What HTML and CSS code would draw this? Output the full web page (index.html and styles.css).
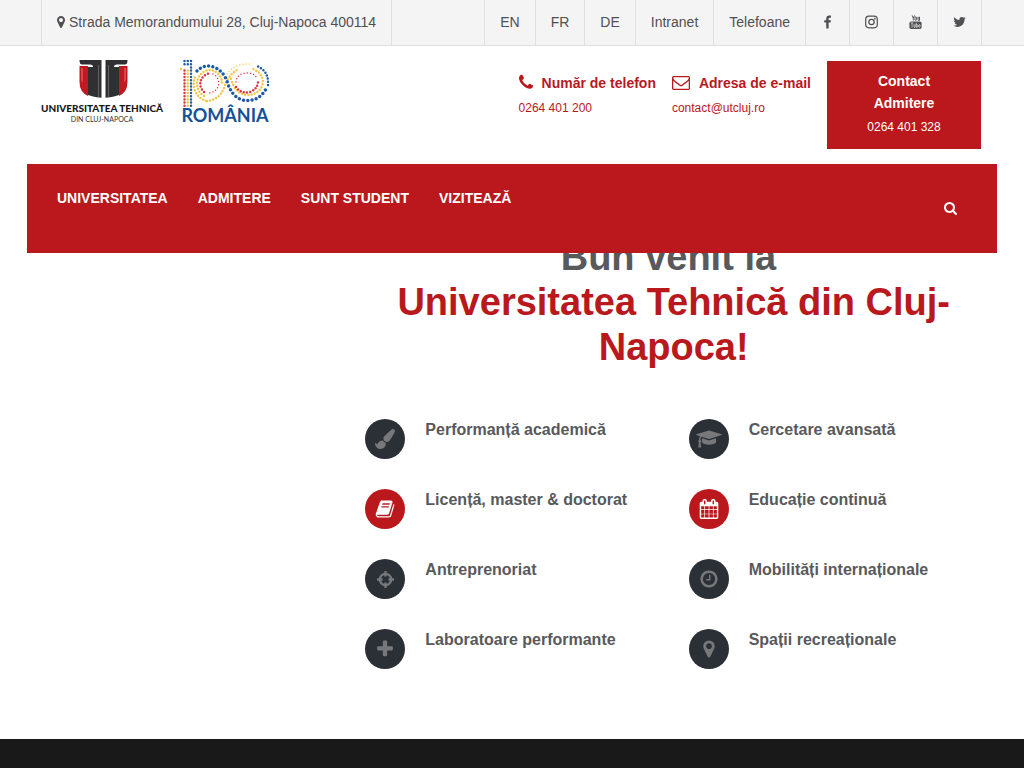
FILE: index.html
```html
<!DOCTYPE html>
<html lang="ro">
<head>
    <meta charset="UTF-8">
    <meta name="viewport" content="width=device-width, initial-scale=1.0">
    <title>Universitatea Tehnică din Cluj-Napoca</title>
    <link rel="stylesheet" href="styles.css">
</head>
<body>
    <div class="topbar">
        <div class="container topbar-inner">
            <ul class="top-list">
                <li><span class="top-item"><svg class="pin" viewBox="384 128 1024 1536"><path d="M1152 640q0-106-75-181t-181-75-181 75-75 181 75 181 181 75 181-75 75-181zm256 0q0 109-33 179l-364 774q-16 33-47.500 52t-67.500 19-67.500-19-46.500-52l-365-774q-33-70-33-179 0-212 150-362t362-150 362 150 150 362z"/></svg>Strada Memorandumului 28, Cluj-Napoca 400114</span></li>
            </ul>
            <ul class="top-list">
                <li><a class="top-item" href="#">EN</a></li>
                <li><a class="top-item" href="#">FR</a></li>
                <li><a class="top-item" href="#">DE</a></li>
                <li><a class="top-item" href="#">Intranet</a></li>
                <li><a class="top-item" href="#">Telefoane</a></li>
                <li><a class="top-item" href="#" aria-label="Facebook"><svg class="social" viewBox="64 0 1664 1664"><path d="M1343 12v264h-157q-86 0-116 36t-30 108v189h293l-39 296h-254v759h-306v-759h-255v-296h255v-218q0-186 104-288.500t277-102.500q147 0 228 12z"/></svg></a></li>
                <li><a class="top-item" href="#" aria-label="Instagram"><svg class="social line" viewBox="0 0 13 13"><rect x=".7" y=".7" width="11.600" height="11.600" rx="3.200"/><circle cx="6.500" cy="6.500" r="2.700"/><circle cx="9.800" cy="3.200" r=".3"/></svg></a></li>
                <li><a class="top-item" href="#" aria-label="YouTube"><svg class="social" viewBox="0 0 13 15"><path class="thin" d="M3 .5l1.200 3v2.300M5.400.5l-1.200 3M7.500 2.500v2.300q0 1-.8 1t-.8-1V2.800q0-.8.8-.8t.8.8M9.200 2v3q0 .8.700.8T10.700 5V2v4"/><rect x="0" y="7" width="13" height="8" rx="1.800"/><path class="thin cut" d="M1.500 8.500h2.600M2.800 8.500v5M4.900 10v2.700q0 .7.600.7t.6-.7V10M7.300 8.300v5M7.400 10.600q1.300-1 1.300.4v1.500q0 1.200-1.300.5M11.500 12.500q-.8 1.600-1.500.3v-1.900q.8-1.400 1.500 0v.8H10"/></svg></a></li>
                <li><a class="top-item" href="#" aria-label="Twitter"><svg class="social" viewBox="60 80 1660 1660"><path d="M1684 408q-67 98-162 167 1 14 1 42 0 130-38 259.500t-115.500 248.500-184.500 210.500-258 146-323 54.500q-271 0-496-145 35 4 78 4 225 0 401-138-105-2-188-64.500t-114-159.500q33 5 61 5 43 0 85-11-112-23-185.500-111.500t-73.500-205.500v-4q68 38 146 41-66-44-105-115t-39-154q0-88 44-163 121 149 294.500 238.500t371.500 99.500q-8-38-8-74 0-134 94.500-228.500t228.500-94.500q140 0 236 102 109-21 205-78-37 115-142 178 93-10 186-50z"/></svg></a></li>
            </ul>
        </div>
    </div>

    <header class="container header">
        <div class="logos">
            <a href="#" aria-label="Universitatea Tehnică">
                <svg class="logo-ut" viewBox="0 1 120 62">
                    <path fill="#c01920" d="M37.500 6h8.500v30q-8.500-4-8.500-14zM85.500 6h-8.500v30q8.500-4 8.500-14z"/>
                    <path fill="#d6474b" d="M39 8h2v15l-2-3zM82 8h2v12l-2 3z"/>
                    <path fill="#303033" d="M37.500 0h22v37.800q-5-.3-8.500-1.300V7q0-2.500-3-2.500h-8Q37.500 4.500 37.500 0zM85.500 0h-22v37.800q5-.3 8.500-1.300V7q0-2.500 3-2.500h8q2.500 0 2.500-4.500z"/>
                    <path fill="#303033" d="M46 7h5v29.500l-5-1.500zM77 7h-5v29.500l5-1.500z"/>
                    <path fill="#77777a" d="M56 5h.7v32h-.7zM66 5h.7v32h-.7z"/>
                    <text class="logo-name" x="60" y="52">UNIVERSITATEA TEHNICĂ</text>
                    <text class="logo-city" x="60" y="62">DIN CLUJ-NAPOCA</text>
                </svg>
            </a>
            <a href="#" aria-label="România 100">
                <svg class="logo-ro" viewBox="0 1 90 62">
                    <g class="dots">
                        <path class="yellow" d="M1 9v1"/>
                        <path class="blue" d="M4.500 1V7M7.800 1V7M11 1V46"/>
                        <path class="red" d="M4.500 10.600V46"/>
                        <path class="yellow" d="M7.800 10.600V46"/>
                        <path class="yellow" d="M26 41A18 18 0 0 1 16 15"/>
                        <path class="yellow" d="M24 36A14 14 0 0 1 29 10A13 13 0 0 1 42 23"/>
                        <path class="red" d="M24 32A10.500 10.500 0 0 1 30 13.500"/>
                        <path class="red small" d="M33 14A10 10 0 0 1 28 33"/>
                        <path class="yellow" d="M27 41Q39 40 44 28Q49 13 59 9"/>
                        <path class="blue big" d="M17 11Q24 4 34 7Q43 11 47 21Q51 36 62 40Q78 43 86 29"/>
                        <path class="blue" d="M88 25Q89 11 77 6"/>
                        <path class="yellow small" d="M47 14Q55 3 70 4"/>
                        <path class="yellow" d="M51 19Q55 34 67 35Q80 35 83 23Q83 13 73 9"/>
                        <path class="red" d="M56 27Q61 34 70 32Q78 29 78 21"/>
                        <path class="red small" d="M56 22Q57 13 68 13Q75 13 77 19"/>
                    </g>
                    <text class="logo-country" x="45" y="62">ROMÂNIA</text>
                </svg>
            </a>
        </div>
        <div class="contacts">
            <div class="contact">
                <strong><svg class="phone" viewBox="192 256 1408 1408"><path d="M1600 1240q0 27-10 70.500t-21 68.500q-21 50-122 106-94 51-186 51-27 0-53-3.500t-57.500-12.500-47-14.500-55.500-20.500-49-18q-98-35-175-83-127-79-264-216t-216-264q-48-77-83-175-3-9-18-49t-20.500-55.500-14.500-47-12.500-57.500-3.500-53q0-92 51-186 56-101 106-122 25-11 68.500-21t70.500-10q14 0 21 3 18 6 53 76 11 19 30 54t35 63.500 31 53.500q3 4 17.500 25t21.500 35.500 7 28.500q0 20-28.500 50t-62 55-62 53-28.500 46q0 9 5 22.500t8.500 20.500 14 24 11.500 19q76 137 174 235t235 174q2 1 19 11.500t24 14 20.500 8.500 22.500 5q18 0 46-28.500t53-62 55-62 50-28.500q14 0 28.500 7t35.500 21.500 25 17.500q25 15 53.500 31t63.500 35 54 30q70 35 76 53 3 7 3 21z"/></svg>Număr de telefon</strong>
                <a href="tel:0264401200">0264 401 200</a>
            </div>
            <div class="contact">
                <strong><svg class="mail" viewBox="0 128 1792 1664"><path d="M1664 1504v-768q-32 36-69 66-268 206-426 338-51 43-83 67t-86.500 48.500-102.500 24.500h-2q-48 0-102.500-24.500t-86.500-48.500-83-67q-158-132-426-338-37-30-69-66v768q0 13 9.500 22.500t22.500 9.500h1472q13 0 22.500-9.500t9.500-22.500zm0-1051v-24.500l-.5-13-3-12.500-5.500-9-9-7.500-14-2.500h-1472q-13 0-22.500 9.500t-9.500 22.500q0 168 147 284 193 152 401 317 6 5 35 29.500t46 37.500 44.500 31.500 50.500 27.500 43 9h2q20 0 43-9t50.500-27.500 44.500-31.500 46-37.500 35-29.500q208-165 401-317 54-43 100.500-115.500t46.500-131.500zm128-37v1088q0 66-47 113t-113 47h-1472q-66 0-113-47t-47-113v-1088q0-66 47-113t113-47h1472q66 0 113 47t47 113z"/></svg>Adresa de e-mail</strong>
                <a href="mailto:contact@utcluj.ro">contact@utcluj.ro</a>
            </div>
            <a class="admission" href="tel:0264401328">
                <strong>Contact<br>Admitere</strong>
                <span>0264 401 328</span>
            </a>
        </div>
    </header>

    <nav class="nav">
        <ul class="menu">
            <li><a href="#">UNIVERSITATEA</a></li>
            <li><a href="#">ADMITERE</a></li>
            <li><a href="#">SUNT STUDENT</a></li>
            <li><a href="#">VIZITEAZĂ</a></li>
        </ul>
        <button class="search" type="button" aria-label="Caută"><svg viewBox="64 128 1664 1664"><path d="M1216 832q0-185-131.500-316.500t-316.500-131.500-316.500 131.500-131.500 316.500 131.500 316.500 316.500 131.500 316.500-131.500 131.500-316.500zm512 832q0 52-38 90t-90 38q-54 0-90-38l-343-342q-179 124-399 124-143 0-273.500-55.500t-225-150-150-225-55.500-273.500 55.500-273.500 150-225 225-150 273.500-55.500 273.500 55.500 225 150 150 225 55.500 273.500q0 220-124 399l343 343q37 37 37 90z"/></svg></button>
    </nav>

    <main class="container welcome">
        <div class="welcome-content">
            <h1>Bun venit la&nbsp;<br><span>Universitatea Tehnică din Cluj-Napoca!</span></h1>
            <div class="features">
                <div class="feature">
                    <div class="circle"><svg viewBox="0 0 1792 1792"><path d="M1615 0q70 0 122.500 46.500t52.500 116.500q0 63-45 151-332 629-465 752-97 91-218 91-126 0-216.500-92.500t-90.500-219.500q0-128 92-212l638-579q59-54 130-54zm-909 1034q39 76 106.500 130t150.500 76l1 71q4 213-129.500 347t-348.500 134q-123 0-218-46.500t-152.500-127.500-86.500-183-29-220q7 5 41 30t62 44.500 59 36.500 46 17q41 0 55-37 25-66 57.500-112.500t69.500-76 88-47.500 103-25.500 125-10.500z"/></svg></div>
                    <h2>Performanță academică</h2>
                </div>
                <div class="feature">
                    <div class="circle"><svg class="wide" viewBox="0 0 2304 1792"><path d="M1774 836l18 316q4 69-82 128t-235 93.500-323 34.500-323-34.500-235-93.500-82-128l18-316 574 181q22 7 48 7t48-7zm530-324q0 23-22 31l-1120 352q-4 1-10 1t-10-1l-652-206q-43 34-71 111.500t-34 178.500q63 36 63 109 0 69-58 107l58 433q2 14-8 25-9 11-24 11h-192q-15 0-24-11-10-11-8-25l58-433q-58-38-58-107 0-73 65-111 11-207 98-330l-333-104q-22-8-22-31t22-31l1120-352q4-1 10-1t10 1l1120 352q22 8 22 31z"/></svg></div>
                    <h2>Cercetare avansată</h2>
                </div>
                <div class="feature">
                    <div class="circle active"><svg viewBox="0 0 1792 1792"><path d="M1703 478q40 57 18 129l-275 906q-19 64-76.500 107.500t-122.500 43.500h-923q-77 0-148.500-53.500t-99.500-131.500q-24-67-2-127 0-4 3-27t4-37q1-8-3-21.500t-3-19.500q2-11 8-21t16.500-23.500 16.500-23.500q23-38 45-91.500t30-91.500q3-10 .5-30t-.5-28q3-11 17-28t17-23q21-36 42-92t25-90q1-9-2.500-32t.5-28q4-13 22-30.500t22-22.500q19-26 42.500-84.500t27.500-96.500q1-8-3-25.500t-2-26.500q2-8 9-18t18-23 17-21q8-12 16.500-30.500t15-35 16-36 19.500-32 26.500-23.500 36-11.500 47.500 5.500l-1 3q38-9 51-9h761q74 0 114 56t18 130l-274 906q-36 119-71.500 153.500t-128.500 34.500h-869q-27 0-38 15-11 16-1 43 24 70 144 70h923q29 0 56-15.500t35-41.500l300-987q7-22 5-57 38 15 59 43zm-1064 2q-4 13 2 22.500t20 9.500h608q13 0 25.500-9.500t16.500-22.500l21-64q4-13-2-22.500t-20-9.500h-608q-13 0-25.500 9.500t-16.500 22.500zm-83 256q-4 13 2 22.500t20 9.500h608q13 0 25.500-9.500t16.500-22.500l21-64q4-13-2-22.500t-20-9.500h-608q-13 0-25.500 9.500t-16.500 22.500z"/></svg></div>
                    <h2>Licență, master &amp; doctorat</h2>
                </div>
                <div class="feature">
                    <div class="circle active"><svg viewBox="0 0 1792 1792"><path d="M192 1664h288v-288h-288v288zm352 0h320v-288h-320v288zm-352-352h288v-320h-288v320zm352 0h320v-320h-320v320zm-352-384h288v-288h-288v288zm736 736h320v-288h-320v288zm-384-736h320v-288h-320v288zm768 736h288v-288h-288v288zm-384-352h320v-320h-320v320zm-352-864v-288q0-13-9.500-22.500t-22.500-9.500h-64q-13 0-22.500 9.500t-9.500 22.500v288q0 13 9.500 22.500t22.500 9.500h64q13 0 22.500-9.500t9.500-22.500zm736 864h288v-320h-288v320zm-384-384h320v-288h-320v288zm384 0h288v-288h-288v288zm32-480v-288q0-13-9.500-22.500t-22.500-9.500h-64q-13 0-22.500 9.500t-9.500 22.500v288q0 13 9.500 22.500t22.500 9.500h64q13 0 22.500-9.500t9.500-22.500zm384-64v1280q0 52-38 90t-90 38h-1408q-52 0-90-38t-38-90v-1280q0-52 38-90t90-38h128v-96q0-66 47-113t113-47h64q66 0 113 47t47 113v96h384v-96q0-66 47-113t113-47h64q66 0 113 47t47 113v96h128q52 0 90 38t38 90z"/></svg></div>
                    <h2>Educație continuă</h2>
                </div>
                <div class="feature">
                    <div class="circle"><svg class="target" viewBox="0 0 20 20"><circle cx="10.500" cy="10.500" r="5.700"/><path d="M10.500 2v5.500M10.500 13.500v5.500M2 10.500h5.500M13.500 10.500h5.500"/></svg></div>
                    <h2>Antreprenoriat</h2>
                </div>
                <div class="feature">
                    <div class="circle"><svg viewBox="0 0 1792 1792"><path d="M1024 544v448q0 14-9 23t-23 9h-320q-14 0-23-9t-9-23v-64q0-14 9-23t23-9h224v-352q0-14 9-23t23-9h64q14 0 23 9t9 23zm416 352q0-148-73-273t-198-198-273-73-273 73-198 198-73 273 73 273 198 198 273 73 273-73 198-198 73-273zm224 0q0 209-103 385.500t-279.500 279.500-385.500 103-385.500-103-279.500-279.500-103-385.500 103-385.500 279.500-279.500 385.500-103 385.500 103 279.500 279.500 103 385.500z"/></svg></div>
                    <h2>Mobilități internaționale</h2>
                </div>
                <div class="feature">
                    <div class="circle"><svg viewBox="0 0 1792 1792"><path d="M1600 736v192q0 40-28 68t-68 28h-416v416q0 40-28 68t-68 28h-192q-40 0-68-28t-28-68v-416h-416q-40 0-68-28t-28-68v-192q0-40 28-68t68-28h416v-416q0-40 28-68t68-28h192q40 0 68 28t28 68v416h416q40 0 68 28t28 68z"/></svg></div>
                    <h2>Laboratoare performante</h2>
                </div>
                <div class="feature">
                    <div class="circle"><svg viewBox="0 0 1792 1792"><path d="M1152 640q0-106-75-181t-181-75-181 75-75 181 75 181 181 75 181-75 75-181zm256 0q0 109-33 179l-364 774q-16 33-47.500 52t-67.500 19-67.500-19-46.500-52l-365-774q-33-70-33-179 0-212 150-362t362-150 362 150 150 362z"/></svg></div>
                    <h2>Spații recreaționale</h2>
                </div>
            </div>
        </div>
    </main>

    <footer class="footer"></footer>
</body>
</html>
```
FILE: styles.css
```css
* {
    box-sizing: border-box;
}
body {
    margin: 0;
    min-height: 100vh;
    display: flex;
    flex-direction: column;
    font-family: "Liberation Sans", Arial, sans-serif;
    font-size: 14px;
    line-height: 22px;
    color: #505052;
    background: #fff;
}
ul {
    list-style: none;
    margin: 0;
    padding: 0;
}
a {
    color: inherit;
    text-decoration: none;
}
svg {
    fill: currentColor;
}
.container {
    width: 100%;
    max-width: 970px;
    margin: 0 auto;
    padding: 0 15px;
}

/* top bar */
.topbar {
    background: #f4f4f4;
    border-bottom: 1px solid #e0e0e0;
}
.topbar-inner {
    display: flex;
    justify-content: space-between;
}
.top-list {
    display: flex;
    border-left: 1px solid #e0e0e0;
    margin: 0 0 0 -1px;
}
.top-list li {
    border-right: 1px solid #e0e0e0;
}
.top-item {
    display: flex;
    align-items: center;
    height: 45px;
    padding: 0 15px 1px;
}
.pin {
    width: 8px;
    height: 12px;
    margin-right: 4px;
}
.social {
    width: 13px;
    height: 14px;
}
.line {
    fill: none;
    stroke: currentColor;
    stroke-width: 1.2;
}
.thin {
    fill: none;
    stroke: currentColor;
    stroke-width: 1;
}
.cut {
    stroke: #f4f4f4;
    stroke-width: .7;
}

/* logos and contact */
.header {
    display: flex;
    justify-content: space-between;
    align-items: flex-start;
    padding: 15px 16px 15px 15px;
}
.logos {
    display: flex;
    gap: 18px;
}
.logos svg {
    display: block;
    height: 62px;
    overflow: visible;
}
.logo-ut {
    width: 120px;
}
.logo-ro {
    width: 90px;
}
.logo-name,
.logo-city,
.logo-country {
    font-family: Lato, sans-serif;
    text-anchor: middle;
}
.logo-name {
    font-size: 10px;
    font-weight: 900;
    fill: #17171a;
}
.logo-city {
    font-size: 7px;
    fill: #333;
}
.logo-country {
    font-size: 18px;
    font-weight: 700;
    fill: #17509a;
}
.dots {
    fill: none;
    stroke-width: 2.5;
    stroke-linecap: round;
    stroke-dasharray: 0 3.2;
}
.blue {
    stroke: #1d5ba6;
}
.yellow {
    stroke: #f3c747;
}
.red {
    stroke: #dc3545;
}
.big {
    stroke-width: 3.5;
    stroke-dasharray: 0 4.3;
}
.small {
    stroke-width: 1.5;
}
.contacts {
    display: flex;
    align-items: flex-start;
    gap: 16px;
    color: #b9181d;
}
.contact {
    padding-top: 11px;
}
.contact strong {
    display: flex;
    align-items: center;
    margin-bottom: 3px;
}
.contact a {
    display: block;
    font-size: 12px;
}
.phone {
    width: 14px;
    height: 18px;
    margin-right: 9px;
}
.mail {
    width: 18px;
    height: 18px;
    margin-right: 9px;
}
.admission {
    width: 154px;
    padding: 9px 15px 11px;
    background: #ba181c;
    color: #fff;
    text-align: center;
}
.admission strong,
.admission span {
    display: block;
}
.admission span {
    margin-top: 2px;
    font-size: 12px;
}

/* main menu, overlaps the welcome title */
.nav {
    position: relative;
    z-index: 2;
    width: 100%;
    max-width: 970px;
    min-height: 89px;
    margin: 0 auto;
    padding: 0 40px 0 30px;
    display: flex;
    justify-content: space-between;
    background: #ba181c;
    color: #fff;
}
.menu {
    display: flex;
    gap: 30px;
    padding-top: 23px;
    font-weight: bold;
}
.search {
    align-self: center;
    padding: 0;
    border: none;
    background: none;
    color: #fff;
    cursor: pointer;
}
.search svg {
    display: block;
    width: 13px;
    height: 13px;
}

/* welcome */
.welcome {
    margin-top: -18px;
    padding-bottom: 40px;
}
.welcome-content {
    width: calc((100% + 30px) * 2 / 3 - 30px);
    margin-left: auto;
}
h1 {
    margin: 0 0 49px;
    font-size: 38px;
    line-height: 45px;
    text-align: center;
    color: #58595b;
}
h1 span {
    color: #b9181d;
}
.features {
    display: grid;
    grid-template-columns: 1fr 1fr;
    column-gap: 30px;
}
.feature {
    display: flex;
    gap: 20px;
    min-height: 70px;
}
.circle {
    display: flex;
    flex: none;
    align-items: center;
    justify-content: center;
    width: 40px;
    height: 40px;
    border-radius: 50%;
    background: #2b3037;
    color: #77787a;
}
.circle svg {
    width: 20px;
    height: 20px;
}
.circle .wide {
    width: 26px;
}
.target {
    fill: none;
    stroke: currentColor;
    stroke-width: 2.3;
}
.active {
    background: #ba181c;
    color: #fff;
}
h2 {
    margin: 0;
    font-size: 16px;
    line-height: 22px;
    color: #58595b;
}

.footer {
    flex: 1;
    min-height: 29px;
    background: #191919;
}
```
